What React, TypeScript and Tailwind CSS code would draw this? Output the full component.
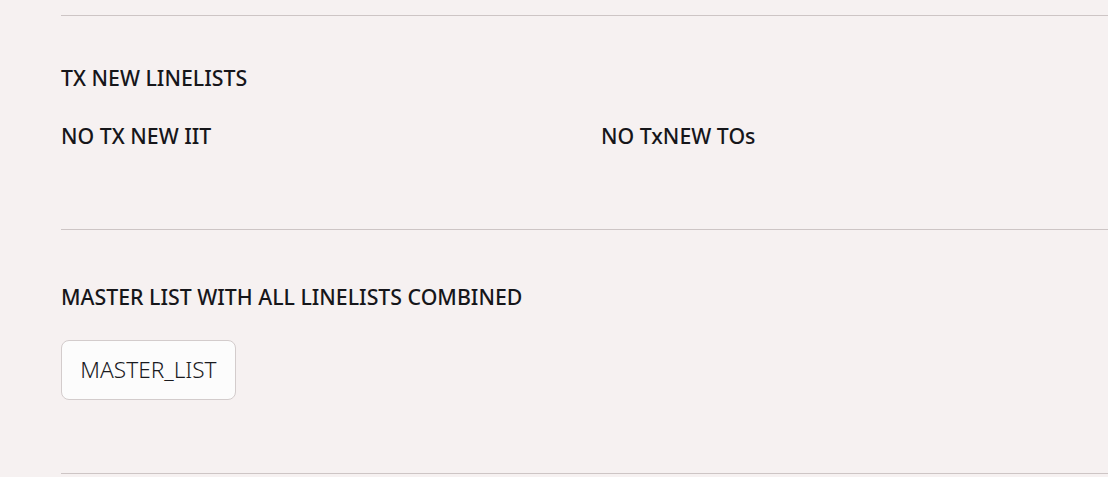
export default function App() {
  return (
    <div className="h-[477px] w-[1108px] overflow-hidden bg-[#f6f1f1] pl-[61px] pt-[15px] text-[#16161a] font-['Noto_Sans',sans-serif]">
      <div className="w-[1080px]">
        <hr className="border-0 border-t border-[#cdc5c5]" />

        {/* TX NEW section */}
        <p className="mt-[48px] text-[21.3px] leading-[28px] font-medium">TX NEW LINELISTS</p>
        <div className="mt-[30px] flex gap-4">
          <p className="w-[524px] text-[21.3px] leading-[28px] font-medium">NO TX NEW IIT</p>
          <p className="w-[524px] text-[21.3px] leading-[28px] font-medium">NO TxNEW TOs</p>
        </div>

        <hr className="mt-[79px] border-0 border-t border-[#cdc5c5]" />

        {/* Master list */}
        <p className="mt-[53px] text-[21.3px] leading-[28px] font-medium">MASTER LIST WITH ALL LINELISTS COMBINED</p>
        <button className="mt-[29px] flex h-[60px] w-[175px] items-center justify-center rounded-lg border border-[#d3cccc] bg-[#fcfcfc] text-[22.6px] font-light text-[#1a1a1e]">
          MASTER_LIST
        </button>

        <hr className="mt-[73px] border-0 border-t border-[#cdc5c5]" />
      </div>
    </div>
  );
}
